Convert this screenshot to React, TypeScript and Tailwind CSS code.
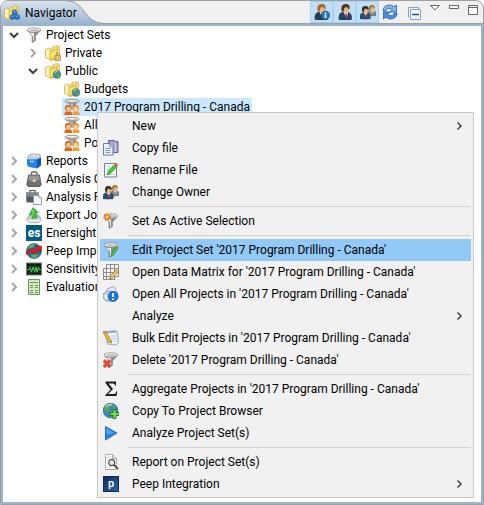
import type { ReactNode } from "react";

type IconProps = { children: ReactNode };

function Svg({ children }: IconProps) {
  return (
    <svg viewBox="0 0 16 16" className="size-4 shrink-0" aria-hidden="true">
      {children}
    </svg>
  );
}

/* ---------- shared drawings ---------- */

function FolderShape() {
  return (
    <>
      <path d="M8.500 1.500 12.500.500l2 1V12L6 15.500z" fill="#f8e07c" stroke="#d0ac48" strokeWidth=".6" />
      <path d="M.500 4.500 3.500 3l2.500 2.500V15L.500 12.500z" fill="#fff4ae" stroke="#c8a440" strokeWidth=".7" />
      <path d="m4 4 4-1.500V5L5.500 6z" fill="#faea98" stroke="#c8a440" strokeWidth=".5" />
      <path d="M5 6.500 12 4v9l-6.500 2.500L5 14z" fill="#ffe25e" stroke="#c8a440" strokeWidth=".7" />
      <path d="m6 13.500 5.500-2V13L6 15z" fill="#eebf3e" />
      <path d="M12.500 1.500V4" stroke="#c8a440" strokeWidth=".7" />
    </>
  );
}

function GlobeShape({ cx, cy, r }: { cx: number; cy: number; r: number }) {
  return (
    <g transform={`translate(${cx} ${cy}) scale(${r / 8})`}>
      <circle r="7.800" fill="#3f86c4" stroke="#2b5c86" strokeWidth=".8" />
      <path d="M-6-4.500C-4-7 0-8 2-7L0-4l-2 1 1 3-2 2-3-2-1-3zM1 0l3-2 3 1v3L4 6 1 7 0 3zM3-5l3 1 0 1-3 0z" fill="#5aa648" />
      <path d="M-5-4Q-2-7 2-6" stroke="#b9def2" strokeWidth="1.500" fill="none" />
    </g>
  );
}

function FunnelShape() {
  return (
    <>
      <path d="M1.500 3.500 6 9v6.500l3.500-2V9L14.500 3.500z" fill="#8c8c8c" stroke="#6e6e6e" strokeWidth=".5" />
      <path d="M3 5.500 7 9.500v4.500l1-.5V6z" fill="#eaeaea" />
      <ellipse cx="8" cy="3" rx="6.800" ry="2.200" fill="#f4f4f4" stroke="#808080" strokeWidth=".7" />
      <ellipse cx="8.500" cy="3.300" rx="4.800" ry="1.100" fill="#bcbcbc" />
    </>
  );
}

function Person({ x, y, s, hair, suit, tie }: { x: number; y: number; s: number; hair: string; suit: string; tie: string }) {
  return (
    <g transform={`translate(${x} ${y}) scale(${s})`}>
      <path d="M0 15.500v-3q0-3 3.500-4.500h5q4 1.500 4 4.500v3q-6 1-12.500 0z" fill={suit} stroke="#172b40" strokeWidth=".5" />
      <path d="M4.500 8h4.500L8 14.500z" fill="#fff" />
      <path d="M6.500 9.500h1.300l1 3-1 2.500-1.300-2.500z" fill={tie} />
      <ellipse cx="6.700" cy="5" rx="3.300" ry="4" fill="#e8b47a" />
      <path d="M2.500 6.500Q1.500 0 6.500 0T10.500 5L9.500 5Q9 3 7 3 5.500 3.500 5 5L4.500 8z" fill={hair} />
    </g>
  );
}

/* ---------- tree icons ---------- */

const NavigatorIcon = () => (
  <Svg>
    <FolderShape />
    <path d="M8.500 6 11 5l2 1v3l-2.500 1-2-1zM6 10.500 8.500 9.500l2 1v3L8 14.500l-2-1zM11 10.500l2.500-1 2 1v3l-2.500 1-2-1z" fill="#1d78dd" stroke="#0d489c" strokeWidth=".6" />
    <path d="m8.800 6.200 2.200.8 1.800-.8M6.200 10.700l2 .8 2-.8M11.200 10.700l2 .8 2-.8" stroke="#76bdfc" fill="none" strokeWidth=".7" />
  </Svg>
);
const FunnelIcon = () => (
  <Svg><FunnelShape /></Svg>
);
const PrivateIcon = () => (
  <Svg>
    <FolderShape />
    <path d="M11.300 11V8.700q1.500-1.700 3 0V11" fill="none" stroke="#8c8c7c" />
    <path d="M10 10.500h5.500v5H10z" fill="#dec66d" stroke="#9a8443" strokeWidth=".7" />
  </Svg>
);
const PublicIcon = () => (
  <Svg><FolderShape /><GlobeShape cx={12} cy={11.500} r={4} /></Svg>
);
const ProjectSetIcon = () => (
  <Svg>
    <path d="M2 2.500 6 7v4h4V7l4-4.500z" fill="#b6b6b6" />
    <path d="M9 6 13 3l-3 5v2H9z" fill="#777" />
    <ellipse cx="8" cy="2.200" rx="7" ry="1.900" fill="#f1f1f1" stroke="#777" strokeWidth=".8" />
    <path d="M3.500 2.700q4.500 1.500 9 0" stroke="#999" fill="none" />
    <path d="M.500 16v-1.500q0-2 3-2.500h1.500q3 .5 3 2.500V16z" fill="#e0641a" />
    <path d="M8.500 16v-1.500q0-2 2.500-2.500h1.500q3 .5 3 2.500V16z" fill="#f0a030" />
    <circle cx="4.200" cy="9.300" r="3.200" fill="#b8642a" />
    <ellipse cx="4.500" cy="10.200" rx="2.400" ry="2.600" fill="#f5bd84" />
    <circle cx="11.800" cy="9.300" r="3.200" fill="#dd9030" />
    <ellipse cx="11.800" cy="10.300" rx="2.300" ry="2.600" fill="#fad3a0" />
  </Svg>
);
const ReportsIcon = () => (
  <Svg>
    <path d="M2 7V3l3-2 9 .5V8z" fill="#f4f4f4" stroke="#8c8c8c" strokeWidth=".8" />
    <path d="M4 5V3M6 5V2M8 5V3M10 5V2M12 5V3" stroke="#999" strokeWidth=".8" />
    <path d="M1 6h10v9.500L3 14Q1 13.500 1 11z" fill="#2583e3" />
    <path d="m11 6 4-2v8.500l-4 3z" fill="#1257ae" />
    <path d="M1 6h10l4-2" stroke="#76baf8" fill="none" />
    <path d="M4 8.500h4" stroke="#9ed2ff" strokeWidth="1.500" />
  </Svg>
);
const CaseIcon = () => (
  <Svg>
    <path d="M5.500 5V2q0-1 1-1h3.500q1 0 1 1V5" stroke="#666" strokeWidth="1.300" fill="none" />
    <path d="M2.500 4h11l1.700 9.500-1.200 2H2l-1.200-2z" fill="#6e6e6e" stroke="#505050" strokeWidth=".8" />
    <path d="M3 4.500h10l.7 4.500L8 10.500 2.300 9z" fill="#969696" />
    <path d="M7 8.500h2.500V11H7z" fill="#e2dbb6" />
  </Svg>
);
const CaseReportIcon = () => (
  <Svg>
    <path d="M4 4V1.500h5V4" stroke="#4d5861" strokeWidth="1.200" fill="none" />
    <path d="M0 3.500h12.500v10H.500z" fill="#515b63" />
    <path d="M0 3.500h12.500v3.500l-6 1L0 7z" fill="#7c878e" />
    <path d="M7.500 6.500H13l2.500 2.500v6.500h-8z" fill="#fafcff" stroke="#7d8ca1" strokeWidth=".8" />
    <path d="M13 6.500V9h2.500" fill="#cad6e4" stroke="#7d8ca1" strokeWidth=".6" />
  </Svg>
);
const ExportIcon = () => (
  <Svg>
    <path d="m1 11 3-3.500h8l3 3.500v2.500L12.500 15.500h-9L1 13.500z" fill="#c4c4c4" stroke="#999" strokeWidth=".7" />
    <path d="M1.500 11.500q6.500 3 13 0v1.500l-2 2h-9l-2-2z" fill="#eee" />
    <path d="M7 .500 12.500 5.500l-2.500.5 1 4.500-4.500 1L6 7.500 3 8z" fill="#3fbb38" stroke="#2a9a30" strokeWidth=".6" />
    <path d="M7 2.500v6" stroke="#9ae57c" />
  </Svg>
);
const EnersightIcon = () => (
  <span className="grid size-4 shrink-0 place-items-center bg-[#005a84] text-[12px] leading-3 font-bold text-white">es</span>
);
const PeepImportIcon = () => (
  <Svg>
    <circle cx="8" cy="8" r="7.500" fill="#237689" stroke="#33433c" strokeWidth=".6" />
    <path d="M2 5q3-5 7-4L7 4 4 6zM5 12l5-1 3 1-3 3-4-.5z" fill="#58a878" />
    <path d="M0 11.500V9l6-3.500 2 1.500 3-2-1-1.500 6-.5-1 5-2-.5L8.500 11l-3-2z" fill="#e91b20" stroke="#8d1018" strokeWidth=".5" />
  </Svg>
);
const SensitivityIcon = () => (
  <Svg>
    <path d="M0 1.500h16v13H0z" fill="#777" />
    <path d="M1 2.500h14v11H1z" fill="#061b0b" />
    <path d="M1 5.500h14M1 8.500h14M1 11.500h14M5 3v10M9 3v10" stroke="#2a5433" strokeWidth=".5" />
    <path d="m1 9 2-.5 1-2L5.500 11 7 6l1.500 5L10 6l1 5 1.500-5 1 3H15" stroke="#4be454" strokeWidth=".9" fill="none" />
  </Svg>
);
const EvaluationIcon = () => (
  <Svg>
    <path d="M2.500.500h11v15h-11z" fill="#d2e9bd" stroke="#6a8f5c" />
    <path d="M4 3.500h8M4 6.500h3M9 6.500h3M4 8.500h3M9 8.500h3M4 11.500h3M9 11.500h3M4 13.500h3M9 13.500h3" stroke="#6a9e58" />
  </Svg>
);

/* ---------- menu icons ---------- */

const CopyIcon = () => (
  <Svg>
    <path d="M5.500.500h6l1 1h2.500v11H5.500z" fill="#a9a1d2" stroke="#6a5f9c" />
    <path d="M12.500 3v9" stroke="#d8d4ef" />
    <path d="M.500 3.500h6.500L10 6.500v8.500H.500z" fill="#eef4ff" stroke="#6381af" />
    <path d="M6.500 3.500V7H10" fill="#c2d4ed" stroke="#6381af" strokeWidth=".7" />
    <path d="M2.500 8.500h5M2.500 10.500h5M2.500 12.500h5" stroke="#7b9cca" />
  </Svg>
);
const RenameIcon = () => (
  <Svg>
    <path d="M1.500 1.500h12v13.500h-12z" fill="#f6faff" stroke="#6784a4" />
    <path d="M3 4.500h5M3 7h4M3 12.500h9" stroke="#c6d3e1" />
    <path d="m5 9.500 6-6.500 2.500 2-6 6.500L4 13z" fill="#46cc27" stroke="#298b1e" strokeWidth=".7" />
    <path d="m11 3 1.500-2 2.700 2-1.700 2z" fill="#ef5350" />
  </Svg>
);
const OwnersIcon = () => (
  <Svg>
    <Person x={7.500} y={1} s={0.68} hair="#a87535" suit="#7f878f" tie="#c18c46" />
    <Person x={0} y={2} s={0.82} hair="#392b20" suit="#234f7b" tie="#b52d35" />
  </Svg>
);
const ActiveFunnelIcon = () => (
  <Svg>
    <FunnelShape />
    <path d="m4 0 1.200 2 2.300-.8L7 3.500 8.500 5 6.300 5.800 5.800 8 4 6.800 2 8l-.2-2.200L0 4.500 1.500 3 1 1l2 .8z" fill="#f06a20" />
    <circle cx="4" cy="4" r="1.700" fill="#ffdf55" />
  </Svg>
);
const EditFunnelIcon = () => (
  <Svg>
    <FunnelShape />
    <path d="m9 11 4-6 2 1.300-4 6.200L8.500 14z" fill="#46cb31" stroke="#238923" strokeWidth=".6" />
    <path d="m13 5 .8-1.300 1.900 1.200L15 6.300z" fill="#ef6b5b" />
  </Svg>
);
const MatrixIcon = () => (
  <Svg>
    <path d="M3.500.500h12v12H12v3H.500v-11h3z" fill="#fafafa" />
    <path d="M3.500.500h12v12M.500 4.500h15M.500 8.500h15M.500 12.500h15M.500 4.500v11H12M3.500.500v15M7.500.500v15M11.500.500v15" fill="none" stroke="#8d8d8d" />
    <path d="m7.500 12 6-6.500 2 2-6 6.500-3 1z" fill="#f1ce58" stroke="#917229" strokeWidth=".8" />
  </Svg>
);
const OpenAllIcon = () => (
  <Svg>
    <path d="M4 3 11 .500l3 6L5 10z" fill="#e8effb" stroke="#8498bb" strokeWidth=".8" />
    <path d="m0 8 4-3 10 1 1.500 5-3 4H3L0 12z" fill="#c7d4ec" stroke="#7990b7" strokeWidth=".8" />
    <path d="M2 9h6v4H2z" fill="#eef6ff" />
    <circle cx="10" cy="10.500" r="5" fill="#1977dc" stroke="#0e4a9c" strokeWidth=".6" />
    <path d="M10 7v4M10 12.500V14" stroke="#fff" strokeWidth="1.700" />
  </Svg>
);
const BulkEditIcon = () => (
  <Svg>
    <path d="M3 2 14 1l1.500 11.500-2 2.500-9-1z" fill="#eaf3fb" stroke="#8197ad" strokeWidth=".8" />
    <path d="M4 1v3M6 1v2.500M8 .500v3M10 .500v2.500M12 .500V3" stroke="#64798e" strokeWidth=".8" />
    <path d="M8 6h5M9 8.500h4.500M9.500 11H14" stroke="#b9cddd" />
    <path d="m0 2 2-1 6 9 .5 3-3-1z" fill="#f6bc31" stroke="#926a21" strokeWidth=".7" />
    <path d="m0 2 2-1 1 1.500-2 1z" fill="#e97574" />
  </Svg>
);
const DeleteIcon = () => (
  <Svg>
    <FunnelShape />
    <path d="m2 7.500 2 2 2-2 2 2-2 2.200 2 2-2 2-2-2-2 2-2-2 2-2-2-2.200z" fill="#ef4b2f" stroke="#ab2419" strokeWidth=".5" />
  </Svg>
);
const SigmaIcon = () => (
  <Svg>
    <path d="M2.500.500H13V4.500h-1q0-2-2-2H5.500L10 8l-5 5h6q2 0 2.300-2.500h1L13.500 15h-11v-1l5-5.500-5-6.500z" fill="#1c1c1c" />
  </Svg>
);
const GlobePlusIcon = () => (
  <Svg>
    <GlobeShape cx={7.500} cy={7.500} r={7.500} />
    <path d="M10 6.500h3v3h3v3h-3v3h-3v-3H7v-3h3z" fill="#7ddc50" stroke="#1c711e" strokeWidth=".9" />
  </Svg>
);
const PlayIcon = () => (
  <Svg>
    <path d="M2.500 1.500 14 8 2.500 15z" fill="#2484ec" stroke="#115fba" strokeWidth=".8" />
    <path d="M3.500 3.500 11 8l-7.500 1z" fill="#56a9fa" />
  </Svg>
);
const ReportSearchIcon = () => (
  <Svg>
    <path d="M2.500.500h7l4 4v11h-11z" fill="#fff" stroke="#aaa" />
    <path d="M9.500.500v4h4" fill="#ddd" stroke="#9b9b9b" strokeWidth=".8" />
    <path d="M4 3h4M4 5h4M4 13h4" stroke="#ccc" />
    <path d="m11 11 4 4" stroke="#6e5032" strokeWidth="2" />
    <circle cx="8.700" cy="8.700" r="3" fill="#dceafb" stroke="#4a4a4a" strokeWidth="1.200" />
  </Svg>
);
const PeepIcon = () => (
  <span className="grid size-4 shrink-0 place-items-center border border-[#16284d] bg-linear-to-br from-[#102c60] to-[#2466a3] text-[11px] leading-3 font-semibold text-white">p</span>
);

/* ---------- toolbar icons ---------- */

const PersonInfoIcon = () => (
  <Svg>
    <Person x={1} y={0} s={1} hair="#a36b29" suit="#233d5d" tie="#b02831" />
    <circle cx="11.500" cy="11.300" r="4.200" fill="#247bbd" stroke="#155488" strokeWidth=".7" />
    <path d="M11.500 8.500v1.300M11.500 10.500V14" stroke="#fff" strokeWidth="1.500" />
  </Svg>
);
const PersonIcon = () => (
  <Svg><Person x={2} y={0} s={1} hair="#4a3420" suit="#1e456d" tie="#c02730" /></Svg>
);
const RefreshIcon = () => (
  <Svg>
    <path d="M1 7Q1 2 6.500 1 10 .500 12 3l2.500-2v7H8l2.200-2.500Q8 3.500 5.500 4.500 4 5.500 4 7z" fill="#7ab8f4" stroke="#235bac" strokeWidth=".8" />
    <path d="M15 9q0 5-5.500 6Q6 15.500 4 13l-2.500 2V8H8l-2.200 2.500Q8 12.500 10.500 11.500 12 10.500 12 9z" fill="#4a90e0" stroke="#235bac" strokeWidth=".8" />
  </Svg>
);

function Chevron({ open }: { open: boolean }) {
  return (
    <button type="button" aria-label={open ? "Collapse" : "Expand"} className="grid size-4 shrink-0 place-items-center">
      <svg viewBox="0 0 12 12" className="size-3" fill="none" strokeWidth="2" aria-hidden="true">
        {open ? <path d="m2 4 4 4 4-4" stroke="#404040" /> : <path d="m4 2 4 4-4 4" stroke="#a6a6a6" />}
      </svg>
    </button>
  );
}

type TreeNode = { label: string; icon: () => ReactNode; open?: boolean; leaf?: boolean; selected?: boolean; children?: TreeNode[] };

const tree: TreeNode[] = [
  {
    label: "Project Sets",
    icon: FunnelIcon,
    open: true,
    children: [
      { label: "Private", icon: PrivateIcon },
      {
        label: "Public",
        icon: PublicIcon,
        open: true,
        children: [
          { label: "Budgets", icon: PublicIcon, leaf: true },
          { label: "2017 Program Drilling - Canada", icon: ProjectSetIcon, leaf: true, selected: true },
          { label: "All", icon: ProjectSetIcon, leaf: true },
          { label: "Po", icon: ProjectSetIcon, leaf: true },
        ],
      },
    ],
  },
  { label: "Reports", icon: ReportsIcon },
  { label: "Analysis C", icon: CaseIcon },
  { label: "Analysis R", icon: CaseReportIcon },
  { label: "Export Job", icon: ExportIcon },
  { label: "Enersight", icon: EnersightIcon },
  { label: "Peep Imp", icon: PeepImportIcon },
  { label: "Sensitivity", icon: SensitivityIcon },
  { label: "Evaluation", icon: EvaluationIcon },
];

function Tree({ nodes, nested }: { nodes: TreeNode[]; nested?: boolean }) {
  return (
    <ul className={nested ? "pl-[19px]" : "pl-[3px]"}>
      {nodes.map((node) => (
        <li key={node.label}>
          <div className="flex h-[18px] items-center gap-0.5">
            {node.leaf ? <span className="size-4 shrink-0" /> : <Chevron open={!!node.open} />}
            <span className={node.selected ? "flex h-full items-center gap-[3px] bg-[#cce8ff] px-0.5" : "flex h-full items-center gap-[3px] px-0.5"}>
              <node.icon />
              <span className="pl-px whitespace-nowrap">{node.label}</span>
            </span>
          </div>
          {node.children && <Tree nodes={node.children} nested />}
        </li>
      ))}
    </ul>
  );
}

type MenuEntry = { label: string; icon?: () => ReactNode; submenu?: boolean; active?: boolean };

const menu: MenuEntry[][] = [
  [
    { label: "New", submenu: true },
    { label: "Copy file", icon: CopyIcon },
    { label: "Rename File", icon: RenameIcon },
    { label: "Change Owner", icon: OwnersIcon },
  ],
  [{ label: "Set As Active Selection", icon: ActiveFunnelIcon }],
  [
    { label: "Edit Project Set '2017 Program Drilling - Canada'", icon: EditFunnelIcon, active: true },
    { label: "Open Data Matrix for '2017 Program Drilling - Canada'", icon: MatrixIcon },
    { label: "Open All Projects in '2017 Program Drilling - Canada'", icon: OpenAllIcon },
    { label: "Analyze", submenu: true },
    { label: "Bulk Edit Projects in '2017 Program Drilling - Canada'", icon: BulkEditIcon },
    { label: "Delete '2017 Program Drilling - Canada'", icon: DeleteIcon },
  ],
  [
    { label: "Aggregate Projects in '2017 Program Drilling - Canada'", icon: SigmaIcon },
    { label: "Copy To Project Browser", icon: GlobePlusIcon },
    { label: "Analyze Project Set(s)", icon: PlayIcon },
  ],
  [
    { label: "Report on Project Set(s)", icon: ReportSearchIcon },
    { label: "Peep Integration", icon: PeepIcon, submenu: true },
  ],
];

function ContextMenu() {
  return (
    <div role="menu" className="absolute top-[111px] right-[9px] left-24 border border-[#c8c8c8] bg-[#f1f1f1] p-0.5">
      {menu.map((group, i) => (
        <div key={i}>
          {i > 0 && <div role="separator" className="my-[3px] ml-7 h-px bg-[#d4d4d4]" />}
          {group.map((item) => (
            <button
              key={item.label}
              type="button"
              role="menuitem"
              className={
                item.active
                  ? "flex h-[22px] w-full items-center bg-[#91c9f7] pr-2 pl-[3px] text-left"
                  : "flex h-[22px] w-full items-center pr-2 pl-[3px] text-left"
              }
            >
              <span className="mr-[13px] size-4 shrink-0">{item.icon && <item.icon />}</span>
              <span className="flex-1 whitespace-nowrap">{item.label}</span>
              {item.submenu && (
                <svg viewBox="0 0 8 8" className="size-2" fill="none" stroke="#333" strokeWidth="1.400" aria-hidden="true">
                  <path d="m2.500 .500 3.500 3.500-3.500 3.500" />
                </svg>
              )}
            </button>
          ))}
        </div>
      ))}
    </div>
  );
}

function ToggleButton({ label, children }: { label: string; children: ReactNode }) {
  return (
    <button type="button" aria-label={label} aria-pressed="true" className="grid h-[22px] w-[23px] place-items-center border border-[#a8d3f2] bg-[#c2def5]">
      {children}
    </button>
  );
}

function Toolbar() {
  return (
    <div className="flex h-[22px] items-center pr-1">
      <ToggleButton label="Show details"><PersonInfoIcon /></ToggleButton>
      <ToggleButton label="Show mine"><PersonIcon /></ToggleButton>
      <ToggleButton label="Show shared"><OwnersIcon /></ToggleButton>
      <button type="button" aria-label="Refresh" className="ml-[3px]"><RefreshIcon /></button>
      <button type="button" aria-label="Collapse all" className="mt-1 ml-2">
        <svg viewBox="0 0 16 16" className="size-4" aria-hidden="true">
          <path d="M2.500 11.500v-10h10v2" fill="none" stroke="#7da7ca" />
          <path d="M4.500 3.500h10v10h-10z" fill="#f6fbff" stroke="#7da7ca" />
          <path d="M6 8.500h7" stroke="#244e7e" strokeWidth="1.500" />
        </svg>
      </button>
      <div className="ml-[7px] flex items-center gap-[7px] self-start">
        <button type="button" aria-label="View menu">
          <svg viewBox="0 0 12 16" className="h-4 w-3" fill="#fff" stroke="#666" aria-hidden="true"><path d="M1.500 4.500h9L6 9z" /></svg>
        </button>
        <button type="button" aria-label="Minimize">
          <svg viewBox="0 0 12 16" className="h-4 w-3" fill="#fff" stroke="#666" aria-hidden="true"><path d="M1.500 4.500h9v3h-9z" /></svg>
        </button>
        <button type="button" aria-label="Maximize">
          <svg viewBox="0 0 12 16" className="h-4 w-3" fill="#fff" stroke="#666" aria-hidden="true"><path d="M1.500 4.500h9v9h-9zM1.500 6.500h9" /></svg>
        </button>
      </div>
    </div>
  );
}

export default function App() {
  return (
    <div className="relative flex min-h-screen flex-col overflow-hidden rounded-t-lg border border-[#a0a0a0] bg-[#99b4d1] font-['Roboto','Segoe_UI',sans-serif] text-[12px] leading-4 text-black">
      <header className="flex h-[23px] items-start justify-between border-b border-[#a0a0a0] bg-[#f0f0f0]">
        <div className="relative flex h-[23px] items-center pr-7 pl-[3px]">
          <svg viewBox="0 0 104 23" preserveAspectRatio="none" className="absolute inset-0 h-full w-full" aria-hidden="true">
            <defs>
              <linearGradient id="tab" x2="0" y2="1">
                <stop stopColor="#d8e3ef" />
                <stop offset="1" stopColor="#99b4d1" />
              </linearGradient>
            </defs>
            <path d="M0 23V0h66C85 0 82 22 104 22.500V23z" fill="url(#tab)" />
            <path d="M66 0C85 0 82 22 104 22.500" fill="none" stroke="#a0a0a0" />
          </svg>
          <span className="relative flex items-center gap-[5px]"><NavigatorIcon />Navigator</span>
        </div>
        <Toolbar />
      </header>
      <main className="mx-0.5 mt-0.5 mb-0.5 flex-1 bg-white">
        <Tree nodes={tree} />
      </main>
      <ContextMenu />
    </div>
  );
}
